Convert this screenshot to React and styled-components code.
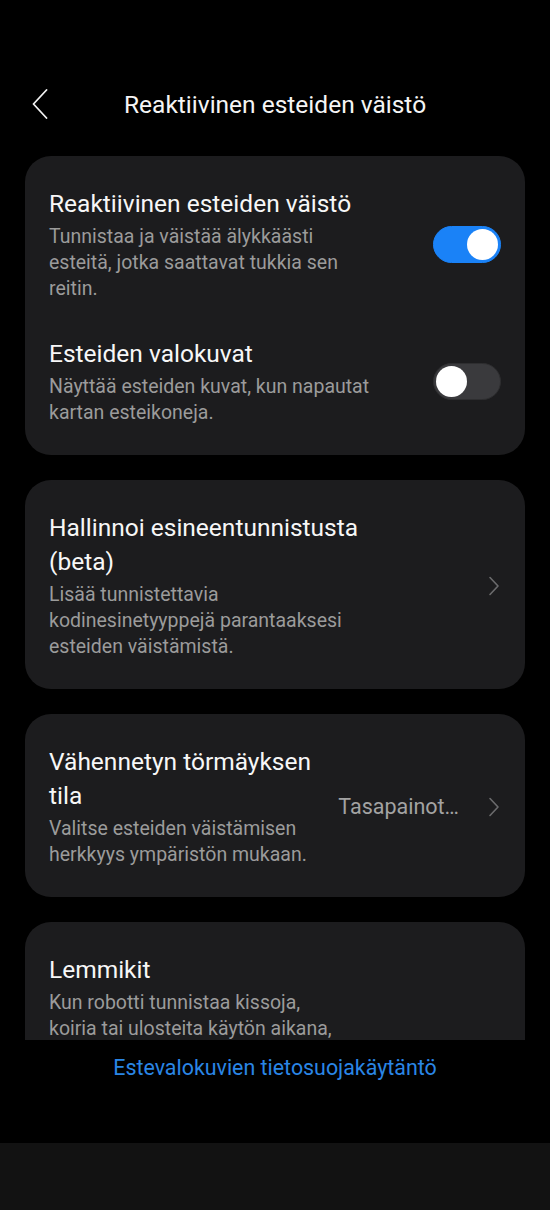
import React from 'react';
import styled, { createGlobalStyle } from 'styled-components';

const GlobalStyle = createGlobalStyle`
  html, body {
    margin: 0;
    padding: 0;
    background: #000;
  }
  body {
    font-family: Roboto, "Noto Sans", "Liberation Sans", sans-serif;
    -webkit-font-smoothing: antialiased;
  }
`;

const Screen = styled.div`
  width: 550px;
  height: 1210px;
  display: flex;
  flex-direction: column;
  background: #000;
  color: #fff;
  overflow: hidden;
`;

const Header = styled.header`
  display: flex;
  align-items: center;
  height: 56px;
  margin-top: 76px;
  padding: 0 0 0 28px;
`;

const BackButton = styled.button`
  display: flex;
  align-items: center;
  justify-content: center;
  width: 24px;
  height: 40px;
  padding: 0;
  border: none;
  background: transparent;
  color: #f2f2f2;
`;

const HeaderTitle = styled.h1`
  margin: 0 0 0 72px;
  font-size: 24.5px;
  font-weight: 400;
  color: #f5f5f5;
  white-space: nowrap;
`;

const ScrollArea = styled.main`
  flex: 1;
  overflow: hidden;
  display: flex;
  flex-direction: column;
  gap: 25px;
  padding: 24px 25px 0;
`;

const Card = styled.section`
  flex-shrink: 0;
  background: #1c1c1e;
  border-radius: 26px;
  padding: 31px 0 29px;
  display: flex;
  flex-direction: column;
  gap: 35px;
`;

const Row = styled.div`
  display: flex;
  align-items: center;
  padding: 0 24px;
  gap: 16px;
`;

const TextBlock = styled.div`
  flex: 1;
  min-width: 0;
`;

const Title = styled.div`
  font-size: 24.5px;
  line-height: 34px;
  color: #f7f7f7;
  white-space: nowrap;
`;

const Desc = styled.div`
  margin-top: 3px;
  font-size: 19.5px;
  line-height: 26px;
  color: #9b9b9b;
  white-space: nowrap;
`;

const Value = styled.span`
  font-size: 21.5px;
  color: #a3a3a3;
  white-space: nowrap;
  margin-right: 12px;
`;

const Track = styled.div`
  flex-shrink: 0;
  position: relative;
  width: 68px;
  height: 37px;
  border-radius: 19px;
  box-sizing: border-box;
  background: ${p => (p.$on ? '#1a82f7' : '#3a3a3d')};
  border: 1px solid ${p => (p.$on ? '#1a82f7' : '#2e2e30')};
`;

const Knob = styled.div`
  position: absolute;
  top: 2px;
  left: ${p => (p.$on ? '33px' : '2px')};
  width: 31px;
  height: 31px;
  border-radius: 50%;
  background: #fff;
`;

const Footer = styled.div`
  height: 103px;
  display: flex;
  justify-content: center;
  padding-top: 13px;
  box-sizing: border-box;
  background: #000;
`;

const PolicyLink = styled.a`
  font-size: 21.4px;
  line-height: 30px;
  color: #2a86e6;
  text-decoration: none;
`;

const NavBar = styled.div`
  height: 67px;
  background: #121212;
`;

function Toggle({ on }) {
  return (
    <Track $on={on}>
      <Knob $on={on} />
    </Track>
  );
}

function Chevron() {
  return (
    <svg width="14" height="20" viewBox="0 0 14 20" fill="none">
      <path d="M3 1.5 L11 10 L3 18.5" stroke="#6b6b6d" strokeWidth="1.6" strokeLinecap="round" strokeLinejoin="round" />
    </svg>
  );
}

function Lines({ lines }) {
  return lines.map((l, i) => (
    <React.Fragment key={i}>
      {i > 0 && <br />}
      {l}
    </React.Fragment>
  ));
}

function SettingRow({ title, desc, right }) {
  return (
    <Row>
      <TextBlock>
        <Title><Lines lines={title} /></Title>
        <Desc><Lines lines={desc} /></Desc>
      </TextBlock>
      {right}
    </Row>
  );
}

export default function App() {
  return (
    <>
      <GlobalStyle />
      <Screen>
        <Header>
          <BackButton aria-label="Takaisin">
            <svg width="16" height="30" viewBox="0 0 16 30" fill="none">
              <path d="M14.5 1 L1.5 15 L14.5 29" stroke="currentColor" strokeWidth="1.8" strokeLinecap="round" strokeLinejoin="round" />
            </svg>
          </BackButton>
          <HeaderTitle>Reaktiivinen esteiden väistö</HeaderTitle>
        </Header>

        <ScrollArea>
          <Card>
            <SettingRow
              title={['Reaktiivinen esteiden väistö']}
              desc={['Tunnistaa ja väistää älykkäästi', 'esteitä, jotka saattavat tukkia sen', 'reitin.']}
              right={<Toggle on />}
            />
            <SettingRow
              title={['Esteiden valokuvat']}
              desc={['Näyttää esteiden kuvat, kun napautat', 'kartan esteikoneja.']}
              right={<Toggle on={false} />}
            />
          </Card>

          <Card>
            <SettingRow
              title={['Hallinnoi esineentunnistusta', '(beta)']}
              desc={['Lisää tunnistettavia', 'kodinesinetyyppejä parantaaksesi', 'esteiden väistämistä.']}
              right={<Chevron />}
            />
          </Card>

          <Card>
            <SettingRow
              title={['Vähennetyn törmäyksen', 'tila']}
              desc={['Valitse esteiden väistämisen', 'herkkyys ympäristön mukaan.']}
              right={
                <>
                  <Value>Tasapainot…</Value>
                  <Chevron />
                </>
              }
            />
          </Card>

          <Card>
            <SettingRow
              title={['Lemmikit']}
              desc={['Kun robotti tunnistaa kissoja,', 'koiria tai ulosteita käytön aikana,']}
            />
          </Card>
        </ScrollArea>

        <Footer>
          <PolicyLink href="#">Estevalokuvien tietosuojakäytäntö</PolicyLink>
        </Footer>
        <NavBar />
      </Screen>
    </>
  );
}
